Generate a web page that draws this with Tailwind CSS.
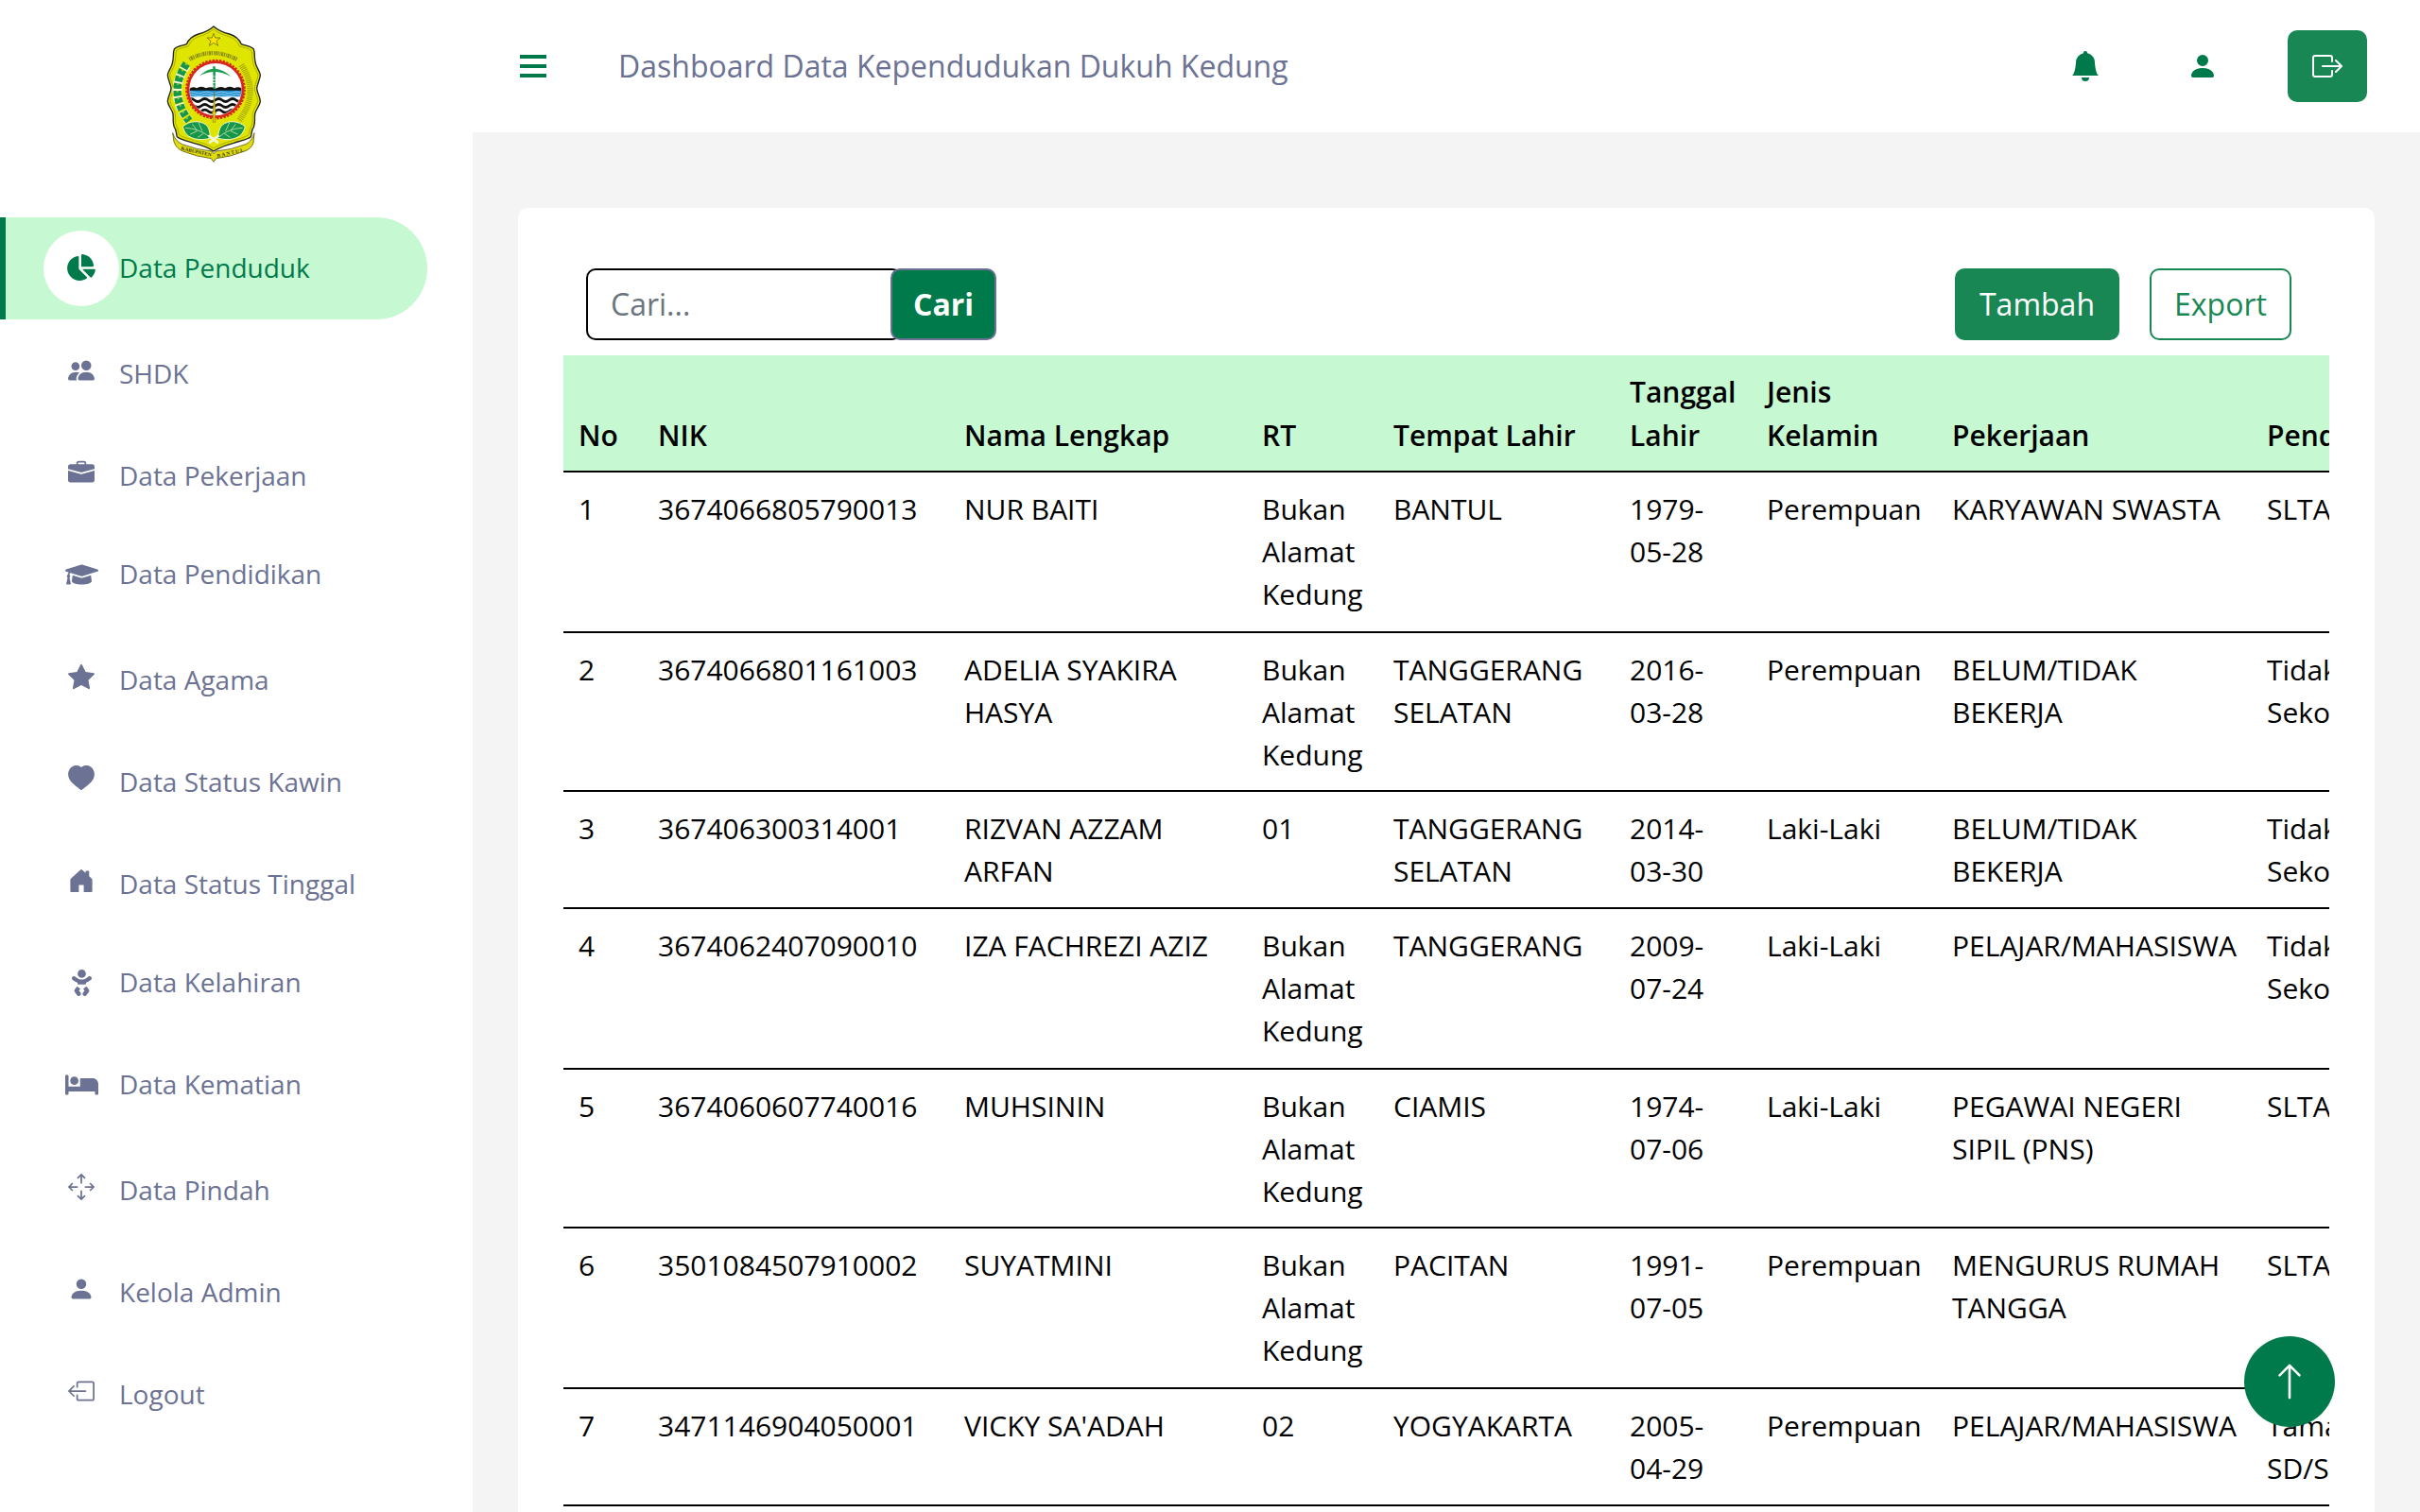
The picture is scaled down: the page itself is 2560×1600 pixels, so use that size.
<!DOCTYPE html>
<html lang="id">
<head>
<meta charset="utf-8">
<title>Dashboard Data Kependudukan</title>
<script src="https://cdn.jsdelivr.net/npm/@tailwindcss/browser@4"></script>
</head>
<body class="flex h-[1600px] w-[2560px] overflow-hidden bg-[#f4f4f4] font-['Open_Sans',sans-serif] text-black">

<!-- Sidebar -->
<aside class="flex h-full w-[500px] shrink-0 flex-col bg-white text-[28px] leading-[42px] text-[#6c7293]">
  <div class="flex h-[230px] shrink-0 pl-[150px] pt-[10px]">
    <svg class="h-[180px] w-[150px]" viewBox="0 0 450 540">
      <path d="M228 54C212 68 196 74 180 78C160 84 150 92 142 110C130 116 114 114 103 126C98 138 102 150 98 166C96 184 84 192 82 208C82 222 92 236 93 250C93 264 82 278 82 292C84 308 97 318 99 332C101 346 97 360 103 374C112 384 108 394 112 404C124 414 148 418 164 424C188 430 210 438 228 450C248 438 268 430 292 424C308 418 334 414 346 404C350 394 346 384 355 374C361 360 357 346 359 332C361 318 374 308 376 292C376 278 365 264 365 250C366 236 376 222 376 208C374 192 362 184 360 166C356 150 360 138 355 126C344 114 328 116 316 110C308 92 298 84 278 78C262 74 244 68 228 54Z" fill="#e0e500" stroke="#222" stroke-width="4"/>
      <path d="M228 63C212 76 196 82 182 86C164 92 156 100 148 117C134 122 120 122 110 131C106 142 109 154 105 168C103 186 91 196 89 209C90 222 99 236 100 250C100 264 90 278 90 291C92 304 104 316 106 331C108 346 104 358 110 370C118 382 115 390 119 398C130 407 150 410 166 416C190 422 212 430 228 441C246 430 266 422 290 416C306 410 328 407 339 398C343 390 340 382 348 370C354 358 350 346 352 331C354 316 366 304 368 291C368 278 358 264 358 250C359 236 368 222 369 209C367 196 355 186 353 168C349 154 352 142 348 131C338 122 324 122 310 117C302 100 294 92 276 86C262 82 244 76 228 63Z" fill="none" stroke="#77790a" stroke-width="1.5"/>
      <path d="M228 76l5 14h16l-12 10 5 15-14-9-14 9 5-15-12-10h16z" fill="#ffe600" stroke="#5b5500" stroke-width="2"/>
      <path d="M151 158Q226 118 304 160" fill="none" stroke="#8d8f12" stroke-width="13" stroke-dasharray="3 2 6 2 4 3"/>
      <path d="M316 176Q376 266 308 354" fill="none" stroke="#a2a40c" stroke-width="19" stroke-dasharray="3 3"/>
      <path d="M142 176Q80 262 148 352" fill="none" stroke="#f7f7d0" stroke-width="30" stroke-dasharray="18 8"/>
      <path d="M142 172Q80 262 150 354" fill="none" stroke="#16964a" stroke-width="25" stroke-dasharray="17 6"/>
      <path d="M142 172Q80 262 150 354" fill="none" stroke="#8ccc2c" stroke-width="6" stroke-dasharray="5 18"/>
      <circle cx="234" cy="254" r="91" fill="none" stroke="#d8251d" stroke-width="9" stroke-dasharray="7 4"/>
      <circle cx="234" cy="254" r="87" fill="#fff" stroke="#d8251d" stroke-width="8"/>
      <clipPath id="disc"><circle cx="234" cy="254" r="82"/></clipPath>
      <g clip-path="url(#disc)">
        <path d="M148 255Q160 242 174 250Q188 240 204 250Q220 243 234 251Q250 241 264 250Q280 241 294 250Q308 242 324 255V262H148Z" fill="#111"/>
        <path d="M145 257H325V277H145Z" fill="#2593d2"/>
        <path d="M145 264q12-6 24 0t24 0 24 0 24 0 24 0 24 0 24 0M145 272q12-6 24 0t24 0 24 0 24 0 24 0 24 0 24 0" fill="none" stroke="#bfe6fa" stroke-width="2"/>
        <path d="M145 288q11-9 22 0t22 0 22 0 22 0 22 0 22 0 22 0 22 0M145 306q11-9 22 0t22 0 22 0 22 0 22 0 22 0 22 0 22 0M145 323q11-9 22 0t22 0 22 0 22 0 22 0 22 0 22 0 22 0" fill="none" stroke="#111" stroke-width="8"/>
      </g>
      <path d="M182 212Q204 190 226 188L225 181H233L234 188Q262 192 283 213Q258 200 234 198V206H226V198Q202 200 182 212Z" fill="#1c9d50"/>
      <path d="M230 204V252" stroke="#1c9d50" stroke-width="7" stroke-dasharray="8 2"/>
      <path d="M230 262l3 64h4l-4 8v24h-7v-24l-4-8h4z" fill="#f2cf12" stroke="#6b6405" stroke-width="1.5"/>
      <g fill="#16964a" stroke="#f3f6c8" stroke-width="3">
        <path d="M130 372C152 352 184 352 204 366C216 378 216 396 218 408C190 418 146 414 134 384Z"/>
        <path d="M328 372C306 352 274 352 256 366C244 378 244 396 240 408C270 418 312 414 324 384Z"/>
        <path d="M138 376Q182 378 214 404M160 364l14 18M180 360l12 26M154 396l22-10M178 406l18-12M320 376Q276 378 246 404M298 364l-14 18M278 360l-12 26M304 396l-22-10M280 406l-18-12" fill="none" stroke-width="2"/>
      </g>
      <path d="M214 402l26 20M242 402l-26 20" stroke="#f7f7e0" stroke-width="8" stroke-linecap="round"/>
      <path d="M98 392Q106 418 128 428Q176 446 222 450L228 458L236 450Q284 446 330 428Q350 418 357 392L354 424Q346 444 326 450Q282 468 236 473L228 484L220 473Q176 468 130 450Q110 442 102 420Z" fill="#e0dc10" stroke="#5c5a08" stroke-width="2.5"/>
      <text font-family="Liberation Serif, serif" font-weight="700" font-size="16" fill="#3a3906" transform="translate(124 445) rotate(13)" textLength="98">KABUPATEN</text>
      <text font-family="Liberation Serif, serif" font-weight="700" font-size="16" fill="#3a3906" transform="translate(240 470) rotate(-13)" textLength="86">BANTUL</text>
    </svg>
  </div>

  <nav class="flex flex-col">
    <a class="flex h-[108px] w-[452px] items-center rounded-r-full border-l-[6px] border-[#007a4a] bg-[#c6f8d2] pl-[40px] text-[#007a4a]">
      <span class="flex size-[80px] items-center justify-center rounded-full bg-white"><svg class="mb-[2px] h-[28px] w-[30px]" viewBox="0 0 544 512" fill="currentColor"><path d="M527.79 288H290.5l158.03 158.03c6.04 6.04 15.98 6.53 22.19.68 38.7-36.46 65.32-85.61 73.13-140.86 1.34-9.46-6.51-17.85-16.06-17.85zm-15.83-64.8C503.72 103.74 408.26 8.28 288.8.04 279.68-.59 272 7.1 272 16.24V240h223.77c9.14 0 16.82-7.68 16.19-16.8zM224 288V50.71c0-9.55-8.39-17.4-17.84-16.06C86.99 51.49-4.1 155.6.14 280.37 4.5 408.51 114.83 513.59 243.03 511.98c50.4-.63 96.97-16.87 135.26-44.03 7.9-5.6 8.42-17.23 1.57-24.08L224 288z"/></svg></span>
      <span class="pb-[2px]">Data Penduduk</span>
    </a>
    <a class="mt-[36px] flex h-[42px] items-end pl-[46px]">
      <span class="flex w-[80px] justify-center pb-[10px]"><svg class="size-[28px]" viewBox="0 0 16 16" fill="currentColor"><path d="M7 14s-1 0-1-1 1-4 5-4 5 3 5 4-1 1-1 1zm4-6a3 3 0 1 0 0-6 3 3 0 0 0 0 6m-5.784 6A2.24 2.24 0 0 1 5 13c0-1.355.68-2.75 1.936-3.72A6.3 6.3 0 0 0 5 9c-4 0-5 3-5 4s1 1 1 1zM4.5 8a2.5 2.5 0 1 0 0-5 2.5 2.5 0 0 0 0 5"/></svg></span>
      <span>SHDK</span>
    </a>
    <a class="mt-[66px] flex h-[42px] items-end pl-[46px]">
      <span class="flex w-[80px] justify-center pb-[10px]"><svg class="size-[28px]" viewBox="0 0 16 16" fill="currentColor"><path d="M6.5 1A1.5 1.5 0 0 0 5 2.5V3H1.5A1.5 1.5 0 0 0 0 4.5v1.384l7.614 2.03a1.5 1.5 0 0 0 .772 0L16 5.884V4.5A1.5 1.5 0 0 0 14.5 3H11v-.5A1.5 1.5 0 0 0 9.5 1zm0 1h3a.5.5 0 0 1 .5.5V3H6v-.5a.5.5 0 0 1 .5-.5"/><path d="M0 12.5A1.5 1.5 0 0 0 1.5 14h13a1.5 1.5 0 0 0 1.5-1.5V6.85L8.129 8.947a.5.5 0 0 1-.258 0L0 6.85z"/></svg></span>
      <span>Data Pekerjaan</span>
    </a>
    <a class="mt-[62px] flex h-[42px] items-end pl-[46px]">
      <span class="flex w-[80px] justify-center pb-[6px]"><svg class="h-[28px] w-[35px]" viewBox="0 0 640 512" fill="currentColor"><path d="M622.34 153.2L343.4 67.5c-15.2-4.67-31.6-4.67-46.79 0L17.66 153.2c-23.54 7.23-23.54 38.36 0 45.59l48.63 14.94c-10.67 13.19-17.23 29.28-17.88 46.9C38.78 266.15 32 276.11 32 288c0 10.78 5.68 19.85 13.86 25.65L20.33 428.53C18.11 438.52 25.71 448 35.94 448h56.11c10.24 0 17.84-9.48 15.62-19.47L82.14 313.65C90.32 307.85 96 298.78 96 288c0-11.57-6.47-21.25-15.66-26.87.76-15.02 8.44-28.3 20.69-36.72L296.6 284.5c9.06 2.78 26.44 6.25 46.79 0l278.95-85.7c23.55-7.24 23.55-38.36 0-45.6zM352.79 315.09c-28.53 8.76-52.84 3.92-65.59 0l-145.02-44.55L128 384c0 35.35 85.96 64 192 64s192-28.65 192-64l-14.18-113.47-145.03 44.56z"/></svg></span>
      <span>Data Pendidikan</span>
    </a>
    <a class="mt-[70px] flex h-[42px] items-end pl-[46px]">
      <span class="flex w-[80px] justify-center pb-[10px]"><svg class="size-[28px]" viewBox="0 0 16 16" fill="currentColor"><path d="M3.612 15.443c-.386.198-.824-.149-.746-.592l.83-4.73L.173 6.765c-.329-.314-.158-.888.283-.95l4.898-.696L7.538.792c.197-.39.73-.39.927 0l2.184 4.327 4.898.696c.441.062.612.636.282.95l-3.522 3.356.83 4.73c.078.443-.36.79-.746.592L8 13.187l-4.389 2.256z"/></svg></span>
      <span>Data Agama</span>
    </a>
    <a class="mt-[66px] flex h-[42px] items-end pl-[46px]">
      <span class="flex w-[80px] justify-center pb-[10px]"><svg class="size-[28px]" viewBox="0 0 16 16" fill="currentColor"><path d="M8 1.2C9.6-.5 12.4-.4 14.1 1.1C16 2.8 16.4 5.6 15.4 7.9C14.1 10.7 11 12.8 8 15C5 12.8 1.9 10.7 .6 7.9C-.4 5.6 0 2.8 1.9 1.1C3.6-.4 6.4-.5 8 1.2"/></svg></span>
      <span>Data Status Kawin</span>
    </a>
    <a class="mt-[66px] flex h-[42px] items-end pl-[46px]">
      <span class="flex w-[80px] justify-center pb-[12px]"><svg class="size-[24px]" viewBox="0 0 24 24" fill="currentColor"><path d="M11.1.4Q12 -.3 12.9.4L16.5 3.7V2.3Q16.5 1.5 17.3 1.5H19.5Q20.3 1.5 20.3 2.3V7.2L23 9.7Q23.6 10.3 23.6 11V23.2Q23.6 24 22.8 24H14.6V16.6H9.4V24H1.2Q.4 24 .4 23.2V11Q.4 10.3 1 9.7Z"/></svg></span>
      <span>Data Status Tinggal</span>
    </a>
    <a class="mt-[62px] flex h-[42px] items-end pl-[46px]">
      <span class="flex w-[80px] justify-center pb-[6px]"><svg class="h-[28px] w-[21px]" viewBox="0 0 384 512" fill="currentColor"><path d="M192 160c44.2 0 80-35.8 80-80S236.2 0 192 0s-80 35.8-80 80 35.8 80 80 80zm-53.4 248.8l25.6-32-61.5-51.2L56.8 383c-11.4 14.2-11.7 34.4-.8 49l48 64c7.9 10.5 19.9 16 32 16 8.3 0 16.8-2.6 24-8 17.7-13.2 21.2-38.3 8-56l-29.4-39.2zm142.7-83.2l-61.5 51.2 25.6 32L216 448c-13.2 17.7-9.7 42.8 8 56 7.2 5.4 15.6 8 24 8 12.2 0 24.2-5.5 32-16l48-64c10.9-14.6 10.6-34.8-.8-49l-45.9-57.4zM376.7 145c-12.7-18.1-37.6-22.4-55.7-9.8l-40.6 28.5c-52.7 37-124.2 37-176.8 0L63 135.3C44.9 122.6 20 127 7.3 145-5.4 163.1-1 188 17 200.7l40.6 28.5c17 11.9 35.4 20.9 54.4 27.9V288h160v-30.8c19-7 37.4-16 54.4-27.9l40.6-28.5c18.1-12.8 22.4-37.7 9.7-55.8z"/></svg></span>
      <span>Data Kelahiran</span>
    </a>
    <a class="mt-[66px] flex h-[42px] items-end pl-[46px]">
      <span class="flex w-[80px] justify-center pb-[6px]"><svg class="h-[28px] w-[35px]" viewBox="0 0 640 512" fill="currentColor"><path d="M176 256c44.11 0 80-35.89 80-80s-35.89-80-80-80-80 35.89-80 80 35.89 80 80 80zm352-128H304c-8.84 0-16 7.16-16 16v144H64V80c0-8.84-7.16-16-16-16H16C7.16 64 0 71.16 0 80v352c0 8.84 7.16 16 16 16h32c8.84 0 16-7.16 16-16v-48h512v48c0 8.84 7.16 16 16 16h32c8.84 0 16-7.16 16-16V240c0-61.86-50.14-112-112-112z"/></svg></span>
      <span>Data Kematian</span>
    </a>
    <a class="mt-[70px] flex h-[42px] items-end pl-[46px]">
      <span class="flex w-[80px] justify-center pb-[10px]"><svg class="size-[28px]" viewBox="0 0 16 16" fill="currentColor"><path d="M7.646.146a.5.5 0 0 1 .708 0l2 2a.5.5 0 0 1-.708.708L8.5 1.707V5.5a.5.5 0 0 1-1 0V1.707L6.354 2.854a.5.5 0 1 1-.708-.708zM8 10a.5.5 0 0 1 .5.5v3.793l1.146-1.147a.5.5 0 0 1 .708.708l-2 2a.5.5 0 0 1-.708 0l-2-2a.5.5 0 0 1 .708-.708L7.5 14.293V10.5A.5.5 0 0 1 8 10M.146 8.354a.5.5 0 0 1 0-.708l2-2a.5.5 0 1 1 .708.708L1.707 7.5H5.5a.5.5 0 0 1 0 1H1.707l1.147 1.146a.5.5 0 0 1-.708.708zM10 8a.5.5 0 0 1 .5-.5h3.793l-1.147-1.146a.5.5 0 0 1 .708-.708l2 2a.5.5 0 0 1 0 .708l-2 2a.5.5 0 0 1-.708-.708L14.293 8.5H10.5A.5.5 0 0 1 10 8"/></svg></span>
      <span>Data Pindah</span>
    </a>
    <a class="mt-[66px] flex h-[42px] items-end pl-[46px]">
      <span class="flex w-[80px] justify-center pb-[10px]"><svg class="size-[28px]" viewBox="0 0 16 16" fill="currentColor"><path d="M3 14s-1 0-1-1 1-4 6-4 6 3 6 4-1 1-1 1zm5-6a3 3 0 1 0 0-6 3 3 0 0 0 0 6"/></svg></span>
      <span>Kelola Admin</span>
    </a>
    <a class="mt-[66px] flex h-[42px] items-end pl-[46px]">
      <span class="flex w-[80px] justify-center pb-[10px]"><svg class="size-[28px]" viewBox="0 0 16 16" fill="currentColor"><path d="M6 12.5a.5.5 0 0 0 .5.5h8a.5.5 0 0 0 .5-.5v-9a.5.5 0 0 0-.5-.5h-8a.5.5 0 0 0-.5.5v2a.5.5 0 0 1-1 0v-2A1.5 1.5 0 0 1 6.5 2h8A1.5 1.5 0 0 1 16 3.5v9a1.5 1.5 0 0 1-1.5 1.5h-8A1.5 1.5 0 0 1 5 12.5v-2a.5.5 0 0 1 1 0z"/><path d="M.146 8.354a.5.5 0 0 1 0-.708l3-3a.5.5 0 1 1 .708.708L1.707 7.5H10.5a.5.5 0 0 1 0 1H1.707l2.147 2.146a.5.5 0 0 1-.708.708z"/></svg></span>
      <span>Logout</span>
    </a>
  </nav>
</aside>

<div class="flex h-full min-w-0 flex-1 flex-col">
  <!-- Top bar -->
  <header class="flex h-[140px] shrink-0 items-center bg-white pl-[50px] pr-[56px] text-[#007a4a]">
    <div class="flex w-[28px] flex-col gap-[6px]">
      <span class="h-1 bg-[#007a4a]"></span><span class="h-1 bg-[#007a4a]"></span><span class="h-1 bg-[#007a4a]"></span>
    </div>
    <h1 class="ml-[76px] flex-1 text-[32px] leading-[48px] text-[#6c7293]">Dashboard Data Kependudukan Dukuh Kedung</h1>
    <svg class="size-[32px]" viewBox="0 0 16 16" fill="currentColor"><path d="M8 16a2 2 0 0 0 2-2H6a2 2 0 0 0 2 2m.995-14.901a1 1 0 1 0-1.99 0A5 5 0 0 0 3 6c0 1.098-.5 6-2 7h14c-1.5-1-2-5.902-2-7 0-2.42-1.72-4.44-4.005-4.901"/></svg>
    <svg class="ml-[92px] size-[32px]" viewBox="0 0 16 16" fill="currentColor"><path d="M3 14s-1 0-1-1 1-4 6-4 6 3 6 4-1 1-1 1zm5-6a3 3 0 1 0 0-6 3 3 0 0 0 0 6"/></svg>
    <button class="ml-[74px] flex h-[76px] w-[84px] items-center justify-center rounded-[10px] bg-[#198754] text-white">
      <svg class="size-[32px]" viewBox="0 0 16 16" fill="currentColor"><path d="M10 12.5a.5.5 0 0 1-.5.5h-8a.5.5 0 0 1-.5-.5v-9a.5.5 0 0 1 .5-.5h8a.5.5 0 0 1 .5.5v2a.5.5 0 0 0 1 0v-2A1.5 1.5 0 0 0 9.5 2h-8A1.5 1.5 0 0 0 0 3.5v9A1.5 1.5 0 0 0 1.5 14h8a1.5 1.5 0 0 0 1.5-1.5v-2a.5.5 0 0 0-1 0z"/><path d="M15.854 8.354a.5.5 0 0 0 0-.708l-3-3a.5.5 0 0 0-.708.708L14.293 7.5H5.5a.5.5 0 0 0 0 1h8.793l-2.147 2.146a.5.5 0 0 0 .708.708z"/></svg>
    </button>
  </header>

  <!-- Resident data card -->
  <main class="ml-[48px] mr-[48px] mt-[80px] min-w-0 flex-1 overflow-hidden rounded-t-[10px] bg-white px-[48px] pt-[64px]">
    <div class="flex h-[76px] items-stretch pl-[24px] pr-[40px] text-[32px] leading-[48px]">
      <div class="flex w-[334px] items-center rounded-[10px] border-2 border-black pl-[24px] text-[#6c757d]">Cari...</div>
      <button class="-ml-[12px] w-[112px] rounded-[10px] border-2 border-[#6c7293] bg-[#007a4a] font-bold text-white">Cari</button>
      <button class="ml-auto w-[174px] rounded-[10px] bg-[#198754] text-white">Tambah</button>
      <button class="ml-[32px] w-[150px] rounded-[10px] border-2 border-[#198754] text-[#198754]">Export</button>
    </div>

    <div class="mt-[16px] overflow-hidden">
      <table class="w-[2086px] table-fixed border-separate border-spacing-0 text-left text-[30px] leading-[45px] [&_td]:border-b-2 [&_td]:border-black [&_td]:px-[16px] [&_td]:pt-[16px] [&_td]:align-top [&_th]:border-b-2 [&_th]:border-black [&_th]:px-[16px] [&_th]:pb-[14px] [&_th]:align-bottom [&_th]:leading-[46px] [&_th]:font-semibold">
        <colgroup><col class="w-[84px]"><col class="w-[324px]"><col class="w-[315px]"><col class="w-[139px]"><col class="w-[250px]"><col class="w-[145px]"><col class="w-[196px]"><col class="w-[333px]"><col class="w-[300px]"></colgroup>
        <thead>
          <tr class="h-[124px] bg-[#c6f8d2]"><th>No</th><th>NIK</th><th>Nama Lengkap</th><th>RT</th><th>Tempat Lahir</th><th>Tanggal<br>Lahir</th><th>Jenis<br>Kelamin</th><th>Pekerjaan</th><th>Pendidikan</th></tr>
        </thead>
        <tbody>
          <tr class="h-[170px]"><td>1</td><td>3674066805790013</td><td>NUR BAITI</td><td>Bukan<br>Alamat<br>Kedung</td><td>BANTUL</td><td>1979-<br>05-28</td><td>Perempuan</td><td>KARYAWAN SWASTA</td><td>SLTA/Sederajat</td></tr>
          <tr class="h-[168px]"><td>2</td><td>3674066801161003</td><td>ADELIA SYAKIRA<br>HASYA</td><td>Bukan<br>Alamat<br>Kedung</td><td>TANGGERANG<br>SELATAN</td><td>2016-<br>03-28</td><td>Perempuan</td><td>BELUM/TIDAK<br>BEKERJA</td><td>Tidak/Belum<br>Sekolah</td></tr>
          <tr class="h-[124px]"><td>3</td><td>367406300314001</td><td>RIZVAN AZZAM<br>ARFAN</td><td>01</td><td>TANGGERANG<br>SELATAN</td><td>2014-<br>03-30</td><td>Laki-Laki</td><td>BELUM/TIDAK<br>BEKERJA</td><td>Tidak/Belum<br>Sekolah</td></tr>
          <tr class="h-[170px]"><td>4</td><td>3674062407090010</td><td>IZA FACHREZI AZIZ</td><td>Bukan<br>Alamat<br>Kedung</td><td>TANGGERANG</td><td>2009-<br>07-24</td><td>Laki-Laki</td><td>PELAJAR/MAHASISWA</td><td>Tidak/Belum<br>Sekolah</td></tr>
          <tr class="h-[168px]"><td>5</td><td>3674060607740016</td><td>MUHSININ</td><td>Bukan<br>Alamat<br>Kedung</td><td>CIAMIS</td><td>1974-<br>07-06</td><td>Laki-Laki</td><td>PEGAWAI NEGERI<br>SIPIL (PNS)</td><td>SLTA/Sederajat</td></tr>
          <tr class="h-[170px]"><td>6</td><td>3501084507910002</td><td>SUYATMINI</td><td>Bukan<br>Alamat<br>Kedung</td><td>PACITAN</td><td>1991-<br>07-05</td><td>Perempuan</td><td>MENGURUS RUMAH<br>TANGGA</td><td>SLTA/Sederajat</td></tr>
          <tr class="h-[124px]"><td>7</td><td>3471146904050001</td><td>VICKY SA'ADAH</td><td>02</td><td>YOGYAKARTA</td><td>2005-<br>04-29</td><td>Perempuan</td><td>PELAJAR/MAHASISWA</td><td>Tamat<br>SD/Sederajat</td></tr>
        </tbody>
      </table>
    </div>
  </main>
</div>

<!-- Back to top -->
<a class="fixed bottom-[90px] right-[90px] flex size-[96px] items-center justify-center rounded-full bg-[#007a4a] text-white">
  <svg class="size-[42px]" viewBox="0 0 16 16" fill="currentColor"><path d="M8 15a.5.5 0 0 0 .5-.5V2.707l3.146 3.147a.5.5 0 0 0 .708-.708l-4-4a.5.5 0 0 0-.708 0l-4 4a.5.5 0 1 0 .708.708L7.5 2.707V14.5a.5.5 0 0 0 .5.5"/></svg>
</a>
</body>
</html>
